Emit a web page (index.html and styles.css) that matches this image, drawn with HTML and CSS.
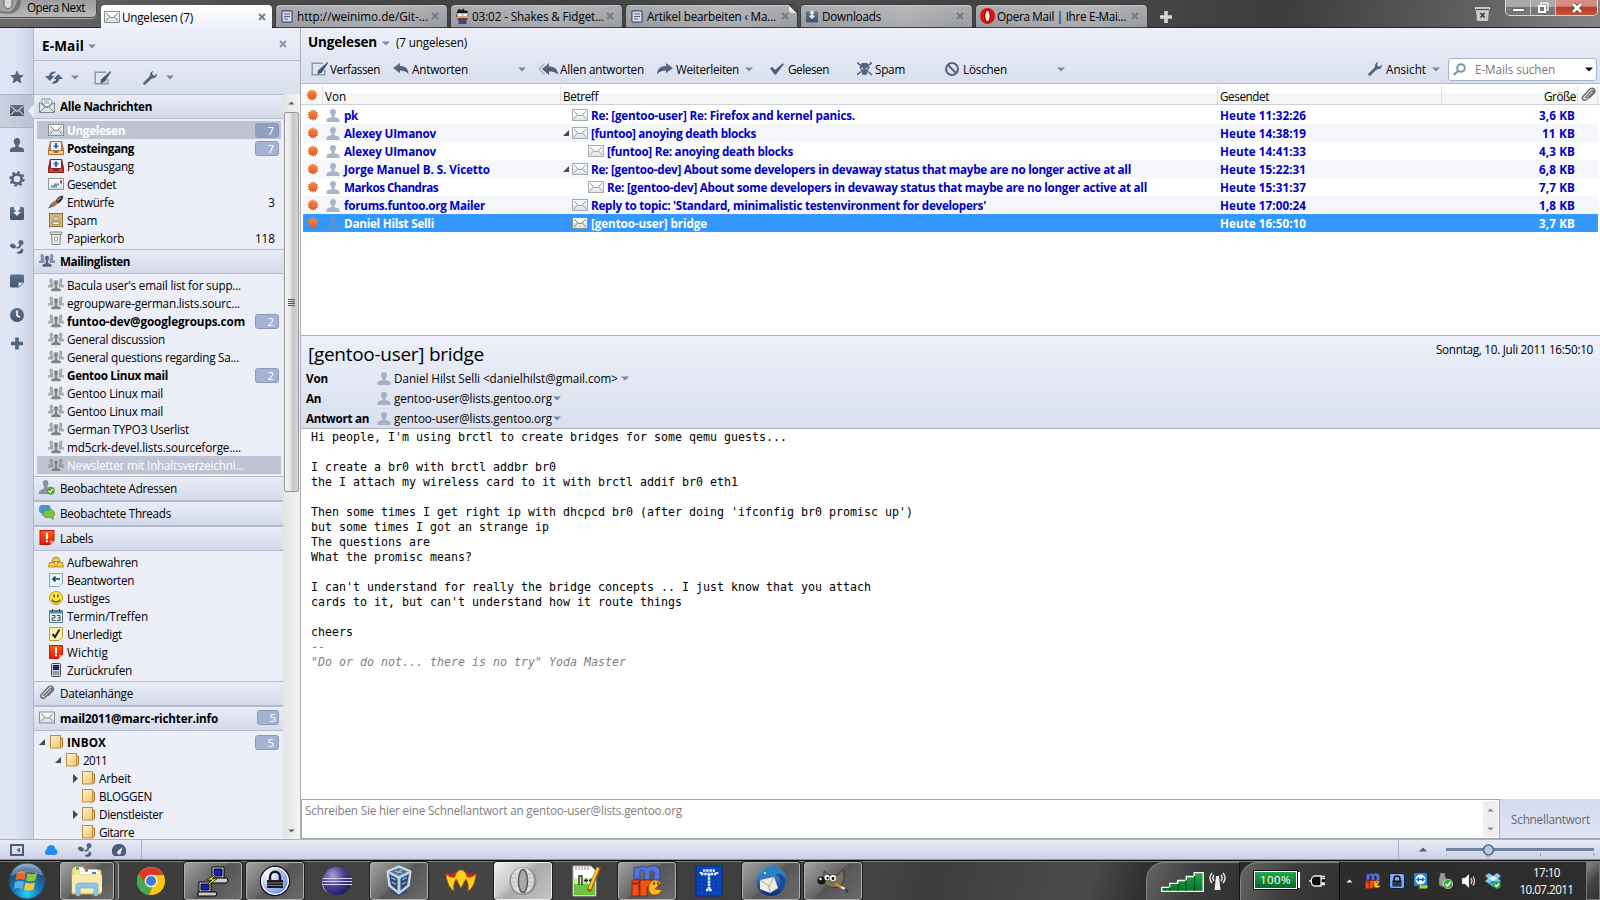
FILE: index.html
```html
<!DOCTYPE html>
<html lang="de">
<head>
<meta charset="utf-8">
<title>Ungelesen (7)</title>
<link rel="stylesheet" href="styles.css">
</head>
<body>
<svg class="defs" width="0" height="0">
<defs>
<linearGradient id="gSlate" x1="0" y1="0" x2="0" y2="1"><stop offset="0" stop-color="#5f7290"/><stop offset="1" stop-color="#44546e"/></linearGradient>
<linearGradient id="gEnv" x1="0" y1="0" x2="0" y2="1"><stop offset="0" stop-color="#fff"/><stop offset="1" stop-color="#d3dfe1"/></linearGradient>
<linearGradient id="gFold" x1="0" y1="0" x2="1" y2="1"><stop offset="0" stop-color="#fff3d4"/><stop offset="1" stop-color="#f2c277"/></linearGradient>
<linearGradient id="gRed" x1="0" y1="0" x2="0" y2="1"><stop offset="0" stop-color="#ff5a1c"/><stop offset="1" stop-color="#e01800"/></linearGradient>
<radialGradient id="gOrb" cx=".5" cy=".85" r=".9"><stop offset="0" stop-color="#29d3ff"/><stop offset=".35" stop-color="#1481bd"/><stop offset=".75" stop-color="#1d4a74"/><stop offset="1" stop-color="#9bb8cc"/></radialGradient>
<radialGradient id="gEcl" cx=".35" cy=".3" r=".8"><stop offset="0" stop-color="#a8a0d8"/><stop offset=".5" stop-color="#4a409a"/><stop offset="1" stop-color="#1a1458"/></radialGradient>
<radialGradient id="gLock" cx=".3" cy=".3" r=".9"><stop offset="0" stop-color="#fff"/><stop offset="1" stop-color="#4c74e8"/></radialGradient>
<linearGradient id="gGreen" x1="0" y1="0" x2="0" y2="1"><stop offset="0" stop-color="#1fae4c"/><stop offset="1" stop-color="#067228"/></linearGradient>
<linearGradient id="gSun" x1="0" y1="0" x2="0" y2="1"><stop offset="0" stop-color="#ee9150"/><stop offset="1" stop-color="#e0541f"/></linearGradient>
<linearGradient id="gBird" x1="0" y1="0" x2="0" y2="1"><stop offset="0" stop-color="#4aa6e0"/><stop offset="1" stop-color="#122a80"/></linearGradient>
</defs>
<symbol id="star" viewBox="0 0 14 14"><path fill="url(#gSlate)" d="M7 0l2 4.800 5 .4-3.800 3.300L11.400 13.500 7 10.800 2.600 13.500l1.200-5L0 5.200l5-.4z"/></symbol>
<symbol id="mailS" viewBox="0 0 14 11"><rect width="14" height="11" fill="url(#gSlate)"/><path d="M.5.8L7 6.500 13.500.8M.5 10.200L5 5.500M13.500 10.200L9 5.500" fill="none" stroke="#c3cadb" stroke-width="1.100"/></symbol>
<symbol id="person" viewBox="0 0 14 14"><path fill="currentColor" d="M7 0c2 0 3.200 1.300 3.200 3.300 0 1.600-.7 3-1.600 3.800v1.700c2 .5 5 .9 5.400 2.600V14H0v-2.600c.4-1.700 3.400-2.100 5.400-2.600V7.100C4.500 6.300 3.800 4.900 3.800 3.300 3.800 1.300 5 0 7 0z"/></symbol>
<symbol id="gear" viewBox="0 0 16 16"><circle cx="8" cy="8" r="4.700" fill="none" stroke="#526482" stroke-width="2.800"/><circle cx="8" cy="8" r="6.700" fill="none" stroke="#526482" stroke-width="2" stroke-dasharray="2.700 2.560"/></symbol>
<symbol id="dl" viewBox="0 0 14 14"><path fill="url(#gSlate)" d="M1 1h3v3h2V0h2v4h2V1h3l1 1v11l-1 1H1l-1-1V2z"/><path fill="#e3e8f4" d="M5.500 0h3v6H11L7 10 3 6h2.500z"/></symbol>
<symbol id="share" viewBox="0 0 14 14"><g fill="url(#gSlate)"><ellipse cx="3" cy="6" rx="3" ry="2.200" transform="rotate(20 3 6)"/><circle cx="11" cy="2.600" r="2.500"/><path d="M5 7.500C8 8 9 6 9.500 4.500l2 .3C11 8 8 9.800 5 7.500z"/><path d="M6.500 12.500c2 1.800 5.500 1.800 6.500-.7s-.5-3.600-2.300-3.200c.5 1.800-.7 3.100-4.200 3.900z"/></g></symbol>
<symbol id="note" viewBox="0 0 14 13"><path fill="url(#gSlate)" d="M1 0h12l1 1v7l-5 5H1l-1-1V1z"/><path fill="#dfe5f2" d="M8.500 12.500V8h5z"/></symbol>
<symbol id="clock" viewBox="0 0 14 14"><circle cx="7" cy="7" r="7" fill="url(#gSlate)"/><path d="M7 2.500V7.500l3 1.800" stroke="#fff" stroke-width="1.600" fill="none"/></symbol>
<symbol id="plus" viewBox="0 0 12 12"><path fill="currentColor" d="M4.200 0h3.600v4.200H12v3.600H7.800V12H4.200V7.800H0V4.200h4.200z"/></symbol>
<symbol id="sync" viewBox="0 0 18 13"><path fill="url(#gSlate)" d="M4 4C5 1.500 7.500 0 11 .8L9.500 2.600C7.800 2.600 7 3.500 7 5h2.500L4.800 10 0 5h3.700zM14 9c-1 2.500-3.500 4-7 3.200l1.500-1.800c1.700 0 2.500-.9 2.500-2.400H8.500L13.200 3 18 8h-3.700z"/></symbol>
<symbol id="pen" viewBox="0 0 17 14"><path d="M12 1.200H1.200v11.600h12.600V8" fill="none" stroke="#8d99ae" stroke-width="1.500"/><path fill="#465871" d="M16.500 0l.5 1-6 9.500-4.500 2 .5-4z"/></symbol>
<symbol id="wrench" viewBox="0 0 14 14"><path fill="#52647f" d="M10.500 0L9 2.500l1 1.800 2 .2L14 2.500c.3 2.500-1 4.800-4.300 4.800L8 8l-5.500 5.500c-1.500 1-3-.5-2-2L6 6l1-1.500C6.800 2 8.300.2 10.500 0z"/></symbol>
<symbol id="env" viewBox="0 0 16 12"><rect x=".5" y=".5" width="15" height="11" fill="url(#gEnv)" stroke="#8b8f90"/><path d="M2 2l4.500 4.500h3L14 2M2 10l3.500-4M14 10l-3.500-4" stroke="#7d8587" fill="none"/></symbol>
<symbol id="envAll" viewBox="0 0 16 15"><path d="M3 1h8l2 2v7H3z" fill="#f6fbfc" stroke="#7d9096"/><path d="M5 3h5M5 5h6" stroke="#76a6b6"/><path d="M.5 4.500v10h15v-10L8 10z" fill="#dfe8e9" stroke="#7f898b"/><path d="M1 14l5-5M15 14l-5-5M3 5l4 3.500h2L13 5" stroke="#778386" fill="none"/></symbol>
<symbol id="inb" viewBox="0 0 16 14"><path d="M2 0h12l2 9v5H0V9z" fill="#b4713a"/><path d="M3 1h10v8H3z" fill="#eef3fa"/><path d="M1 10h4l1 2h4l1-2h4v3H1z" fill="#f6cf94"/><path d="M7 2h2v2.500h2L8 8 5 4.500h2z" fill="#2b62c4"/></symbol>
<symbol id="outb" viewBox="0 0 16 14"><path d="M2 0h12l2 9v5H0V9z" fill="#8e241c"/><path d="M3 1h10v8H3z" fill="#eef3fa"/><path d="M1 10h4l1 2h4l1-2h4v3H1z" fill="#c9473c"/><path d="M7 8h2V5.500h2L8 2 5 5.500h2z" fill="#2b62c4"/></symbol>
<symbol id="sent" viewBox="0 0 16 12"><rect x=".5" y=".5" width="15" height="11" fill="url(#gEnv)" stroke="#929798"/><path fill="#b85a2b" d="M12 2h2v3.500h-2z"/><path d="M3 8.500h6M6 6.500h5" stroke="#6a9aaa" stroke-width="1.800"/></symbol>
<symbol id="quill" viewBox="0 0 16 13"><path fill="#42393a" d="M7 6c2-4 5-6 8-6 1 2-1 6-5 8z"/><path fill="#b96a45" d="M3 8l4-3 3 3-4 3z"/><path fill="#6c6c6c" d="M0 13l3-5 3 3z"/><path d="M9 5l4-3" stroke="#bbb"/></symbol>
<symbol id="spamI" viewBox="0 0 14 14"><rect x=".5" y=".5" width="13" height="13" fill="#d0b382" stroke="#957040"/><path d="M7 3l3 4-1.500 1L7 6 5.500 8 4 7zM3 9h8l-1 2.500H4z" fill="#fff8e8" stroke="#7d6136" stroke-width=".6"/></symbol>
<symbol id="trash" viewBox="0 0 13 14"><path d="M2 3h9l-.6 10.500H2.600z" fill="#ededed" stroke="#868686"/><rect x=".5" y="1" width="12" height="2.500" rx="1" fill="#ddd" stroke="#868686"/><path d="M5 6h3v4H5z" fill="none" stroke="#aaa"/></symbol>
<symbol id="grp" viewBox="0 0 16 13"><path fill="currentColor" opacity=".65" d="M3 0c1.500 0 2.200 1 2 2.500L4.500 4l1 1v4H0V7l2-1.200V4C1 2.500 1.500 0 3 0zM13 0c-1.500 0-2.200 1-2 2.500l.5 1.500-1 1v4H16V7l-2-1.200V4c1-1.500.5-4-1-4z"/><path fill="currentColor" stroke="#eef" stroke-width=".5" d="M8 1.500c1.800 0 2.500 1.200 2.300 3L9.500 6.500V9l3.500 1.500V13H3v-2.500L6.500 9V6.500l-.8-2c-.2-1.800.5-3 2.300-3z"/></symbol>
<symbol id="pers2" viewBox="0 0 15 14"><path fill="#8793a8" d="M6 0c2 0 3 1.300 2.800 3L8 6v2l4 2v3H0v-2.500L4.500 8V6l-1-3C3.500 1.300 4.500 0 6 0z"/><circle cx="11" cy="10" r="3.800" fill="#4ea82c"/><path d="M9 10l1.500 1.500L13 8.500" stroke="#fff" fill="none" stroke-width="1.200"/></symbol>
<symbol id="chat" viewBox="0 0 15 14"><path fill="#3f95dc" d="M2 0h7l2 2v4L9 8H5L3 10V8H2L0 6V2z"/><path fill="#7fc242" stroke="#4d8c22" stroke-width=".6" d="M6 4.500h6.500l2 2v3l-1.500 2 .5 2-3-1.800H6l-2-2v-3z"/></symbol>
<symbol id="excl" viewBox="0 0 14 14"><path fill="url(#gRed)" stroke="#c21800" d="M.5.500h13v9l-4 4h-9z"/><path fill="#ffb08c" d="M10 13v-3h3z"/><path fill="#fff" d="M6 2.500h2v6H6zM6 9.500h2v2H6z"/></symbol>
<symbol id="gold" viewBox="0 0 16 12"><path fill="#f3cf3f" stroke="#a67808" stroke-width=".8" d="M5.500 1.500h5l1.500 4H4zM1.500 6.500h5l1 4.500H.5zM9.500 6.500h5l1 4.500h-7z"/></symbol>
<symbol id="answ" viewBox="0 0 14 14"><path fill="#e8f5fb" stroke="#81a3b6" d="M.5.500h13v9.500l-3.500 3.500H.5z"/><path d="M11 6H4M6.500 3.500L4 6l2.500 2.500" stroke="#1f3c4e" stroke-width="1.700" fill="none"/></symbol>
<symbol id="smile" viewBox="0 0 14 14"><circle cx="7" cy="7" r="6.500" fill="#ffe93a" stroke="#bd9713"/><path d="M5 3.500v3M9 3.500v3M3 8.500c1.500 3.500 6.500 3.500 8 0" fill="none" stroke="#493c00" stroke-width="1.300"/></symbol>
<symbol id="cal" viewBox="0 0 14 14"><path fill="#e8f5fb" stroke="#587a93" d="M.5 1.500h13v12H.5z"/><path fill="#5b86a5" d="M1 2h12v2.500H1z"/><path d="M3.500 0v3M10.500 0v3" stroke="#31495a"/><path d="M3 6.500h3v2.500H3v2.500h3.500M8 6.500h3v5H8M8.500 9H11" fill="none" stroke="#3a4f5c"/></symbol>
<symbol id="todo" viewBox="0 0 14 14"><path fill="#fbf2a8" stroke="#b69d3c" d="M.5.500h13v9.500l-3.500 3.500H.5z"/><path d="M3.500 7L6 10l4.500-7.500" stroke="#222" stroke-width="2" fill="none"/></symbol>
<symbol id="phone" viewBox="0 0 10 14"><rect x=".5" y=".5" width="9" height="13" rx="1" fill="#d4d4d4" stroke="#444"/><path fill="#1b2472" d="M2 2h6v5H2z"/><path d="M2 9h6M2 11h6" stroke="#333" stroke-dasharray="1.500 .7"/></symbol>
<symbol id="clip" viewBox="0 0 15 15"><path d="M4 11l6.500-7c1.500-1 2.500.5 1.500 1.700L5.500 12.500C3 14.500 0 12 2 9.500L9 2c3-2 6 .5 4.500 3.500L8 11" fill="none" stroke="#6b6b6b" stroke-width="1.500"/></symbol>
<symbol id="fold" viewBox="0 0 14 14"><path d="M9 3h3.500v8l-1 1.500H9z" fill="#ebc078" stroke="#a77a2a"/><rect x=".5" y=".5" width="10" height="12.500" fill="url(#gFold)" stroke="#bb8f3e"/></symbol>
<symbol id="sun" viewBox="0 0 12 12"><path fill="url(#gSun)" d="M6 0L7.060 2.040 9 .8 8.900 3.100 11.200 3 9.960 4.940 12 6 9.960 7.060 11.200 9 8.900 8.900 9 11.200 7.060 9.960 6 12 4.940 9.960 3 11.200 3.100 8.900.8 9 2.040 7.060 0 6 2.040 4.940.8 3 3.100 3.100 3 .8 4.940 2.040z"/></symbol>
<symbol id="page" viewBox="0 0 12 13"><rect x=".8" y=".8" width="10.400" height="11.400" rx="1.500" fill="#d5dae2" stroke="#54637c" stroke-width="1.500"/><path d="M3 4h6M3 6.500h6M3 9h4" stroke="#54637c"/></symbol>
<symbol id="x" viewBox="0 0 8 8"><path d="M1 1l6 6M7 1L1 7" stroke="currentColor" stroke-width="1.800"/></symbol>
<symbol id="dn" viewBox="0 0 8 5"><path d="M0 .5h8L4 4.500z" fill="currentColor"/></symbol>
<symbol id="reply" viewBox="0 0 16 12"><path fill="url(#gSlate)" d="M0 5l7-5v3c5 0 8.500 2 8.500 8.500C14 8.500 11 7.500 7 7.500V10z"/></symbol>
<symbol id="rAll" viewBox="0 0 20 12"><path fill="url(#gSlate)" d="M4 6l7-6v3.500c5 0 8.500 2 9 8C17 9 15 8.500 11 8.500V12z"/><path d="M6.500.5L1 6l5.500 5.500" fill="none" stroke="#a4aebf" stroke-width="1.300"/></symbol>
<symbol id="fwd" viewBox="0 0 16 12"><path fill="url(#gSlate)" d="M16 5L9 0v3C4 3 .5 5 0 11.500 2 8.500 5 7.500 9 7.500V10z"/></symbol>
<symbol id="chk" viewBox="0 0 14 11"><path fill="#4b5d79" d="M0 4.500l2.500-1L5 6.500 12.500 0 14 .5 6 11H4.500z"/></symbol>
<symbol id="skull" viewBox="0 0 15 14"><path d="M0 1l3 2M15 1l-3 2M0 13l4-3.500M15 13l-4-3.500M1 .3l1 2M14 .3l-1 2" stroke="#52647f" stroke-width="1.400"/><path fill="#52647f" d="M3 3c1-3 8-3 9 0 .8 2 .2 4-1 5l-1 4c-1 1.300-4 1.300-5 0L4 8C2.800 7 2.200 5 3 3z"/><path fill="#dfe5f0" d="M4 5.500l2.500 1v1L4.500 7zM11 5.500l-2.500 1v1l2-.5z"/></symbol>
<symbol id="ban" viewBox="0 0 14 14"><circle cx="7" cy="7" r="5.900" fill="none" stroke="#52647f" stroke-width="2"/><path d="M3 3l8 8" stroke="#52647f" stroke-width="2"/></symbol>
<symbol id="mag" viewBox="0 0 13 13"><circle cx="8" cy="5" r="3.800" fill="none" stroke="#8194b3" stroke-width="2"/><path d="M5 8L.8 12" stroke="#8194b3" stroke-width="2.400"/></symbol>
<symbol id="opn" viewBox="0 0 6 6"><path d="M6 0v6H0z" fill="#4a4a4a"/></symbol>
<symbol id="cls" viewBox="0 0 5 9"><path d="M0 0v9l5-4.500z" fill="#4a4a4a"/></symbol>
<symbol id="padlock" viewBox="0 0 16 16"><rect x=".5" y=".5" width="15" height="15" rx="2" fill="#7fa8f6" stroke="#0b1b5c"/><path d="M5 8V6c0-4 6-4 6 0v2" fill="none" stroke="#111" stroke-width="1.500"/><path fill="#111" d="M3.500 7.500h9v6h-9z"/><path d="M4 10h8M4 12h8" stroke="#6f98e8" stroke-width=".6"/></symbol>
<symbol id="mirc" viewBox="0 0 32 32"><path d="M3 14V2h5v1c3-3 7-2 8 0 3-3 12-4 13 3v9h-6V7c0-2-4-2-4 0v8h-6V7c0-2-4-2-4 0v7z" fill="#5872dc" stroke="#263070" stroke-width=".7"/><path fill="#f0521a" stroke="#7c1c04" stroke-width=".8" d="M1 15h7v3H1zM1 19h7v12H1zM9 15h12v7h-5v9H9z"/><path d="M30 18c-3-4-9-4-11 0s-2 9 1 11 9 1 11-4l-7-1z" fill="#ffb81c" stroke="#8c4a00" stroke-width=".8"/><path d="M23 17v3M27 17v3" stroke="#222" stroke-width="1.300"/></symbol>
</svg>

<div class="tabbar">
  <div class="opbtn"><svg class="opo" viewBox="0 0 22 17"><path d="M0 0h21C21 8 17 13 9 14L0 13z" fill="#777"/><path d="M0 0h17C16 7 13 11 8 12L0 11z" fill="#a2a2a2"/><path d="M4-2v6c0 6 8 6 8 0v-6" fill="#d9d9d9" stroke="#666"/></svg><span data-w="58">Opera Next</span></div>
  <div class="tab on"><svg class="i16 ev"><use href="#env"/></svg><span data-w="71">Ungelesen (7)</span><svg class="x"><use href="#x"/></svg></div>
  <div class="tab"><svg class="i12 gap"><use href="#page"/></svg><span data-w="131">http://weinimo.de/Git-...</span><svg class="x"><use href="#x"/></svg></div>
  <div class="tab"><svg class="i14 face" viewBox="0 0 14 16"><path fill="#1b1a20" d="M1 5L3 1l3 1 3-2-1 2 4 1 1 4-1 2H1z"/><path fill="#dda97c" d="M1 5h12l-1 5H2z"/><path fill="#fff" d="M3 6h3v2H3zM8 6h3v2H8z"/><path fill="#6b4230" d="M2 10h10v2H2z"/><path fill="#4a3f7c" d="M3 12h8v4H3z"/></svg><span data-w="132">03:02 - Shakes &amp; Fidget...</span><svg class="x"><use href="#x"/></svg></div>
  <div class="tab curl"><svg class="i12 gap"><use href="#page"/></svg><span data-w="129">Artikel bearbeiten ‹ Ma...</span><svg class="x"><use href="#x"/></svg></div>
  <div class="tab"><svg class="i12 gap"><use href="#dl"/></svg><span data-w="59">Downloads</span><svg class="x"><use href="#x"/></svg></div>
  <div class="tab"><svg class="i14" viewBox="0 0 14 15"><ellipse cx="7" cy="7.500" rx="7" ry="7.500" fill="#d8150f"/><ellipse cx="7" cy="7.500" rx="2.500" ry="5.300" fill="#f4e4e2" stroke="#9a0b08"/></svg><span data-w="129">Opera Mail | Ihre E-Mai...</span><svg class="x"><use href="#x"/></svg></div>
  <svg class="newtab"><use href="#plus"/></svg>
  <svg class="bin" viewBox="0 0 15 14"><path fill="#c9c9c9" d="M0 0h15v3h-1l-1 11H2L1 3H0z"/><path d="M1 2.500h13" stroke="#444"/><path d="M5.500 6l4 4.500M9.500 6l-4 4.500" stroke="#333" stroke-width="1.500"/></svg>
  <div class="win"><b><i></i></b><b><svg viewBox="0 0 12 12"><path d="M4 3V1h7v7H9" fill="none" stroke="#eee" stroke-width="1.500"/><path d="M2 4h6v6H2z" fill="none" stroke="#fff" stroke-width="2"/></svg></b><b class="cl"><svg viewBox="0 0 12 12"><path d="M2 2l8 8M10 2l-8 8" stroke="#444" stroke-width="4.500"/><path d="M2 2l8 8M10 2l-8 8" stroke="#fff" stroke-width="2.800"/></svg></b></div>
</div>

<div class="app">
  <nav class="rail">
    <i><svg class="i14"><use href="#star"/></svg></i>
    <i class="sel"><svg class="i14"><use href="#mailS"/></svg></i>
    <i><svg class="i14"><use href="#person"/></svg></i>
    <i><svg class="i16"><use href="#gear"/></svg></i>
    <i><svg class="i14"><use href="#dl"/></svg></i>
    <i><svg class="i14"><use href="#share"/></svg></i>
    <i><svg class="i14"><use href="#note"/></svg></i>
    <i><svg class="i14"><use href="#clock"/></svg></i>
    <i class="last"><svg class="i12"><use href="#plus"/></svg></i>
  </nav>

  <aside class="side">
    <div class="sidehead"><b class="big" data-w="42">E-Mail</b><svg class="dn"><use href="#dn"/></svg><svg class="x"><use href="#x"/></svg></div>
    <div class="sidetools"><svg class="sync"><use href="#sync"/></svg><svg class="dn"><use href="#dn"/></svg><svg class="pen"><use href="#pen"/></svg><svg class="i14"><use href="#wrench"/></svg><svg class="dn"><use href="#dn"/></svg></div>
    <div class="sidebody">
      <div class="list">
        <div class="sec b first"><svg><use href="#envAll"/></svg><span data-w="92">Alle Nachrichten</span></div>
        <ul>
          <li class="b hl"><svg><use href="#env"/></svg><span data-w="58">Ungelesen</span><em>7</em></li>
          <li class="b"><svg><use href="#inb"/></svg><span data-w="67">Posteingang</span><em>7</em></li>
          <li><svg><use href="#outb"/></svg><span data-w="67">Postausgang</span></li>
          <li><svg><use href="#sent"/></svg><span data-w="49">Gesendet</span></li>
          <li><svg><use href="#quill"/></svg><span data-w="47">Entwürfe</span><u>3</u></li>
          <li><svg><use href="#spamI"/></svg><span data-w="30">Spam</span></li>
          <li><svg><use href="#trash"/></svg><span data-w="57">Papierkorb</span><u>118</u></li>
        </ul>
        <div class="sec b dk"><svg><use href="#grp"/></svg><span data-w="70">Mailinglisten</span></div>
        <ul class="gr">
          <li><svg><use href="#grp"/></svg><span data-w="174">Bacula user's email list for supp...</span></li>
          <li><svg><use href="#grp"/></svg><span data-w="173">egroupware-german.lists.sourc...</span></li>
          <li class="b"><svg><use href="#grp"/></svg><span data-w="178">funtoo-dev@googlegroups.com</span><em>2</em></li>
          <li><svg><use href="#grp"/></svg><span data-w="98">General discussion</span></li>
          <li><svg><use href="#grp"/></svg><span data-w="172">General questions regarding Sa...</span></li>
          <li class="b"><svg><use href="#grp"/></svg><span data-w="101">Gentoo Linux mail</span><em>2</em></li>
          <li><svg><use href="#grp"/></svg><span data-w="96">Gentoo Linux mail</span></li>
          <li><svg><use href="#grp"/></svg><span data-w="96">Gentoo Linux mail</span></li>
          <li><svg><use href="#grp"/></svg><span data-w="122">German TYPO3 Userlist</span></li>
          <li><svg><use href="#grp"/></svg><span data-w="174">md5crk-devel.lists.sourceforge....</span></li>
          <li class="hl"><svg><use href="#grp"/></svg><span data-w="177">Newsletter mit Inhaltsverzeichni...</span></li>
        </ul>
        <div class="sec"><svg><use href="#pers2"/></svg><span data-w="117">Beobachtete Adressen</span></div>
        <div class="sec"><svg><use href="#chat"/></svg><span data-w="111">Beobachtete Threads</span></div>
        <div class="sec"><svg><use href="#excl"/></svg><span data-w="33">Labels</span></div>
        <ul>
          <li><svg><use href="#gold"/></svg><span data-w="71">Aufbewahren</span></li>
          <li><svg><use href="#answ"/></svg><span data-w="67">Beantworten</span></li>
          <li><svg><use href="#smile"/></svg><span data-w="43">Lustiges</span></li>
          <li><svg><use href="#cal"/></svg><span data-w="81">Termin/Treffen</span></li>
          <li><svg><use href="#todo"/></svg><span data-w="55">Unerledigt</span></li>
          <li><svg><use href="#excl"/></svg><span data-w="41">Wichtig</span></li>
          <li><svg><use href="#phone"/></svg><span data-w="65">Zurückrufen</span></li>
        </ul>
        <div class="sec"><svg><use href="#clip"/></svg><span data-w="73">Dateianhänge</span></div>
        <div class="sec b"><svg><use href="#env"/></svg><span data-w="158">mail2011@marc-richter.info</span><em>5</em></div>
        <ul class="tree">
          <li class="b l0"><svg class="ar"><use href="#opn"/></svg><svg><use href="#fold"/></svg><span data-w="39">INBOX</span><em>5</em></li>
          <li class="l1"><svg class="ar"><use href="#opn"/></svg><svg><use href="#fold"/></svg><span data-w="24">2011</span></li>
          <li class="l2"><svg class="ar cl"><use href="#cls"/></svg><svg><use href="#fold"/></svg><span data-w="32">Arbeit</span></li>
          <li class="l2"><svg class="ar cl"></svg><svg><use href="#fold"/></svg><span data-w="53">BLOGGEN</span></li>
          <li class="l2"><svg class="ar cl"><use href="#cls"/></svg><svg><use href="#fold"/></svg><span data-w="64">Dienstleister</span></li>
          <li class="l2"><svg class="ar cl"></svg><svg><use href="#fold"/></svg><span data-w="35">Gitarre</span></li>
        </ul>
      </div>
      <div class="scroll"><svg class="up dn"><use href="#dn"/></svg><div class="thumb"><s></s><s></s><s></s><s></s></div><svg class="dn"><use href="#dn"/></svg></div>
    </div>
  </aside>

  <main class="main">
    <div class="head">
      <div class="title"><b class="big" data-w="69">Ungelesen</b><svg class="dn"><use href="#dn"/></svg><span data-w="71">(7 ungelesen)</span></div>
      <div class="tools">
        <div><svg class="pen"><use href="#pen"/></svg><span data-w="50">Verfassen</span></div>
        <div><svg class="t16"><use href="#reply"/></svg><span data-w="56">Antworten</span><svg class="dn far"><use href="#dn"/></svg></div>
        <div><svg class="t20"><use href="#rAll"/></svg><span data-w="84">Allen antworten</span></div>
        <div><svg class="t16"><use href="#fwd"/></svg><span data-w="63">Weiterleiten</span><svg class="dn near"><use href="#dn"/></svg></div>
        <div><svg class="i14 c"><use href="#chk"/></svg><span data-w="41">Gelesen</span></div>
        <div><svg class="t15"><use href="#skull"/></svg><span data-w="30">Spam</span></div>
        <div><svg class="i14 c"><use href="#ban"/></svg><span data-w="44">Löschen</span><svg class="dn far"><use href="#dn"/></svg></div>
        <div><svg class="i14 c"><use href="#wrench"/></svg><span data-w="40">Ansicht</span><svg class="dn near"><use href="#dn"/></svg></div>
        <div class="search"><svg class="i13"><use href="#mag"/></svg><span data-w="80">E-Mails suchen</span><svg class="dn"><use href="#dn"/></svg></div>
      </div>
    </div>
    <div class="mails">
      <div class="cols"><span class="c0"><svg><use href="#sun"/></svg></span><span class="c1"><span data-w="21">Von</span></span><span class="c2"><span data-w="35">Betreff</span></span><span class="c3"><span data-w="49">Gesendet</span></span><span class="c4"><span data-w="32">Größe</span></span><span class="c5"><svg><use href="#clip"/></svg></span></div>
      <div class="row"><svg class="su"><use href="#sun"/></svg><svg class="pe"><use href="#person"/></svg><span class="nm"><span data-w="14">pk</span></span><span class="tw"></span><svg class="en"><use href="#env"/></svg><span class="sj"><span data-w="264">Re: [gentoo-user] Re: Firefox and kernel panics.</span></span><span class="dt"><span data-w="86">Heute 11:32:26</span></span><span class="sz"><span data-w="36">3,6 KB</span></span></div>
      <div class="row"><svg class="su"><use href="#sun"/></svg><svg class="pe"><use href="#person"/></svg><span class="nm"><span data-w="92">Alexey UImanov</span></span><span class="tw"><svg><use href="#opn"/></svg></span><svg class="en"><use href="#env"/></svg><span class="sj"><span data-w="165">[funtoo] anoying death blocks</span></span><span class="dt"><span data-w="86">Heute 14:38:19</span></span><span class="sz"><span data-w="33">11 KB</span></span></div>
      <div class="row ch"><svg class="su"><use href="#sun"/></svg><svg class="pe"><use href="#person"/></svg><span class="nm"><span data-w="92">Alexey UImanov</span></span><span class="tw"></span><svg class="en"><use href="#env"/></svg><span class="sj"><span data-w="186">[funtoo] Re: anoying death blocks</span></span><span class="dt"><span data-w="86">Heute 14:41:33</span></span><span class="sz"><span data-w="36">4,3 KB</span></span></div>
      <div class="row"><svg class="su"><use href="#sun"/></svg><svg class="pe"><use href="#person"/></svg><span class="nm"><span data-w="146">Jorge Manuel B. S. Vicetto</span></span><span class="tw"><svg><use href="#opn"/></svg></span><svg class="en"><use href="#env"/></svg><span class="sj"><span data-w="540">Re: [gentoo-dev] About some developers in devaway status that maybe are no longer active at all</span></span><span class="dt"><span data-w="86">Heute 15:22:31</span></span><span class="sz"><span data-w="36">6,8 KB</span></span></div>
      <div class="row ch"><svg class="su"><use href="#sun"/></svg><svg class="pe"><use href="#person"/></svg><span class="nm"><span data-w="94">Markos Chandras</span></span><span class="tw"></span><svg class="en"><use href="#env"/></svg><span class="sj"><span data-w="540">Re: [gentoo-dev] About some developers in devaway status that maybe are no longer active at all</span></span><span class="dt"><span data-w="86">Heute 15:31:37</span></span><span class="sz"><span data-w="36">7,7 KB</span></span></div>
      <div class="row"><svg class="su"><use href="#sun"/></svg><svg class="pe"><use href="#person"/></svg><span class="nm"><span data-w="141">forums.funtoo.org Mailer</span></span><span class="tw"></span><svg class="en"><use href="#env"/></svg><span class="sj"><span data-w="395">Reply to topic: 'Standard, minimalistic testenvironment for developers'</span></span><span class="dt"><span data-w="86">Heute 17:00:24</span></span><span class="sz"><span data-w="36">1,8 KB</span></span></div>
      <div class="row cur"><svg class="su"><use href="#sun"/></svg><svg class="pe"><use href="#person"/></svg><span class="nm"><span data-w="90">Daniel Hilst Selli</span></span><span class="tw"></span><svg class="en"><use href="#env"/></svg><span class="sj"><span data-w="116">[gentoo-user] bridge</span></span><span class="dt"><span data-w="86">Heute 16:50:10</span></span><span class="sz"><span data-w="36">3,7 KB</span></span></div>
    </div>
    <div class="mhead">
      <div class="subj"><span class="st" data-w="176">[gentoo-user] bridge</span><span class="when" data-w="157">Sonntag, 10. Juli 2011 16:50:10</span></div>
      <div class="f"><b><span data-w="22">Von</span></b><svg><use href="#person"/></svg><span data-w="224">Daniel Hilst Selli &lt;danielhilst@gmail.com&gt;</span><svg class="dn s"><use href="#dn"/></svg></div>
      <div class="f"><b><span data-w="15">An</span></b><svg><use href="#person"/></svg><span data-w="158">gentoo-user@lists.gentoo.org</span><svg class="dn"><use href="#dn"/></svg></div>
      <div class="f"><b><span data-w="63">Antwort an</span></b><svg><use href="#person"/></svg><span data-w="158">gentoo-user@lists.gentoo.org</span><svg class="dn"><use href="#dn"/></svg></div>
    </div>
    <pre class="msg">Hi people, I'm using brctl to create bridges for some qemu guests...

I create a br0 with brctl addbr br0
the I attach my wireless card to it with brctl addif br0 eth1

Then some times I get right ip with dhcpcd br0 (after doing 'ifconfig br0 promisc up')
but some times I got an strange ip
The questions are
What the promisc means?

I can't understand for really the bridge concepts .. I just know that you attach
cards to it, but can't understand how it route things

cheers
<span class="sig">--
<i>"Do or do not... there is no try" Yoda Master</i></span></pre>
    <div class="quick"><div class="qt"><span data-w="377">Schreiben Sie hier eine Schnellantwort an gentoo-user@lists.gentoo.org</span></div><div class="qs"><svg class="up dn"><use href="#dn"/></svg><svg class="dn"><use href="#dn"/></svg></div><div class="qb"><span data-w="79">Schnellantwort</span></div></div>
  </main>
</div>

<div class="status">
  <div class="sl"><svg viewBox="0 0 14 12" class="pn"><rect x="1" y="1" width="12" height="10" fill="none" stroke="#4b5d79" stroke-width="2"/><path d="M10 3.500v5L6.500 6z" fill="#4b5d79"/></svg><svg viewBox="0 0 14 10" class="cloud"><path fill="#1f8df2" d="M3 10a3 3 0 0 1-.5-5.500C3 1.500 5 0 7.200 0 9.500 0 11 1.500 11.300 3.800A3.200 3.200 0 0 1 11 10z"/></svg><svg class="i14"><use href="#share"/></svg><svg viewBox="0 0 14 12" class="pn"><path fill="#4b5d79" d="M7 0a7 7 0 0 1 6 11l-1.500 1h-9L1 11A7 7 0 0 1 7 0z"/><path fill="#dfe5f2" d="M10.500 3L9 8.500a2 2 0 1 1-3-1.800z"/></svg></div>
  <div class="sr"><svg class="up dn"><use href="#dn"/></svg><svg class="slider" viewBox="0 0 150 16"><path d="M0 6.500h148" stroke="#6f84a4" stroke-width="3"/><path d="M0 10.500v2M94.500 10.500v2M148 10.500v2M42 12v2" stroke="#6f7b90"/><circle cx="42.500" cy="7" r="5" fill="#b4cbe0" stroke="#50688a" stroke-width="1.600"/></svg></div>
</div>

<div class="task">
  <div class="orb"><svg viewBox="0 0 38 38"><circle cx="19" cy="19" r="18" fill="url(#gOrb)" stroke="#2a4a63"/><path fill="#e8682c" d="M9 11c3-2 6-2 9-.5l-1.500 7.500c-3-1.300-6-1.200-9 .3z"/><path fill="#8cc63c" d="M19.500 11c3 1.500 6 1.500 9.500 0L27.500 18.500c-3 1.300-6 1.300-9.500 0z"/><path fill="#5aabe8" d="M7 20c3-1.500 6-1.500 9 0l-1.500 7c-3-1.500-6-1.500-8.500 0z"/><path fill="#fbc82c" d="M17.500 20.500c3.500 1.300 6.500 1.300 9.500 0L25.500 27.500c-3 1.500-6 1.500-9.500 0z"/><path d="M3 14C5 5 12 2 19 2s14 3 16 12c-9-5-23-5-32 0z" fill="#fff" opacity=".3"/></svg></div>
  <div class="tb run stack"><svg viewBox="0 0 32 32"><path fill="#f3df95" stroke="#cfae52" stroke-width=".8" d="M1 5l2-3h9l2 3h16v24H1z"/><path d="M4 3.500h8M9 5.500h18M9 8h20" stroke="#fff" stroke-width="2"/><path d="M5 3.500h3" stroke="#1c9c38" stroke-width="2"/><path d="M14 5.500h3" stroke="#d42f1e" stroke-width="2"/><path d="M21 8h4" stroke="#3487d6" stroke-width="2"/><path fill="#f8eab0" d="M1 10h30v17H1z"/><path fill="#8fc8e6" stroke="#5b9fc6" stroke-width=".6" d="M5 31V21c0-2 1-3 3-3h16c2 0 3 1 3 3v10h-4v-8H9v8z"/></svg></div>
  <div class="tb"><svg viewBox="0 0 32 32"><circle cx="16" cy="16" r="14" fill="#fbc914"/><path fill="#d93a2b" d="M3.900 9A14 14 0 0 1 28.500 10H16a6 6 0 0 0-5.500 3.800L9 18z"/><path fill="#48a84c" d="M3.900 9L10.500 19a6 6 0 0 0 7 2.800L14 30A14 14 0 0 1 3.900 9z"/><circle cx="16" cy="16" r="6.300" fill="#f0f0f0"/><circle cx="16" cy="16" r="5" fill="#3f7fd0"/></svg></div>
  <div class="tb run"><svg viewBox="0 0 32 32"><g stroke="#000"><path fill="#ddd" d="M15 2h12v11H15zM2 17h12v10H2z"/><path fill="#ccc" d="M14 13h16l1 3-2 2H14zM1 27h18l1 3-2 1H1z"/><path fill="#1020d0" d="M17 4h8v7h-8zM4 19h8v6H4z"/><path fill="#ffef1a" stroke-width=".6" d="M21 8l-11 7h5l-7 7 12-8h-5z"/></g></svg></div>
  <div class="tb run"><svg viewBox="0 0 32 32"><circle cx="16" cy="16" r="14.500" fill="url(#gLock)" stroke="#111" stroke-width="1.500"/><circle cx="16" cy="16" r="13.300" fill="none" stroke="#fff" stroke-width="1.300"/><path d="M11 16v-4c0-7 10-7 10 0v4" fill="none" stroke="#1a1a1a" stroke-width="2.500"/><path fill="#1c1c1c" d="M8 15h16v8H8z"/><path d="M8 18h16M8 20.500h16" stroke="#777"/></svg></div>
  <div class="tb"><svg viewBox="0 0 32 32"><circle cx="16" cy="16" r="14" fill="url(#gEcl)"/><path d="M9 3C-1 9-1 23 9 29-4 23 1 7 9 3z" fill="#e8b0e0"/><path d="M2 13.500h29M2 16.500h29M2 19.500h29" stroke="#d8d8f0" stroke-width="1.100"/></svg></div>
  <div class="tb run"><svg viewBox="0 0 32 32"><path fill="#3b5170" d="M10 22h12l3 6-9 3-9-3z"/><path fill="#b9cfe2" stroke="#e2eef8" d="M16 1l12 5-2 15-10 8-10-8L4 6z"/><path fill="#56718f" d="M16 3l9 3.500-9 4.500-9-4.500z"/><path fill="#2a4a70" d="M6 9l8.500 4.500v12L8 20zM26 9l-8.500 4.500v12L24 20z"/><path d="M8 12.500l5 2.500M9 17l4 2.500M24 12.500L19 15M23 17l-4 2.500M12 6l7 2M14 8l5-3" stroke="#9fc0dc" stroke-width="1.300"/></svg></div>
  <div class="tb"><svg viewBox="0 0 32 32"><path fill="#d3201a" d="M1 8c4 2 7 2 10-1h10c3 3 6 3 10 1-1 4-2 6-4 8H5C3 14 2 12 1 8z"/><path fill="#ffd21e" stroke="#b85f00" stroke-width=".7" d="M1 9c1 8 3 14 8 17-1-5 0-9 2-12 2 2 3 6 5 9 2-3 3-7 5-9 2 3 3 7 2 12 5-3 7-9 8-17-3 3-6 4-9 3-1-4-3-7-6-7s-5 3-6 7c-3 1-6 0-9-3z"/></svg></div>
  <div class="tb run lit"><svg viewBox="0 0 32 32"><ellipse cx="16" cy="16" rx="13.500" ry="14" fill="#8d8d8d"/><ellipse cx="15.500" cy="15.500" rx="11.500" ry="13" fill="#dcdcdc"/><ellipse cx="16" cy="16" rx="4.500" ry="11.500" fill="#a9a9a9" stroke="#5c5c5c" stroke-width="1.500"/><path d="M6 9h5M4 13h7M4 17h7M5 21h6M21 9h5M21 13h7M21 17h7M21 21h6" stroke="#aaa" stroke-width=".7"/></svg></div>
  <div class="tb"><svg viewBox="0 0 32 32"><path fill="#fff" stroke="#aaa" d="M4 1h18l5 5v25H4z"/><path fill="#6dc43a" d="M5 18h21v12H5z"/><path fill="#cdeeab" d="M5 13h21v6H5z"/><path d="M7 2v3M10 2v3M13 2v3M16 2v3M19 2v3" stroke="#888"/><path d="M10 20v-9h3v9M15 15.500h4M17 13.500v4M20 15.500h4M22 13.500v4" stroke="#222" fill="none" stroke-width="1.300"/><path d="M30 2L20 26" stroke="#9a5c10" stroke-width="4.500"/><path d="M29 3L20.500 24" stroke="#ffc838" stroke-width="2.500"/></svg></div>
  <div class="tb run"><svg><use href="#mirc"/></svg></div>
  <div class="tb"><svg viewBox="0 0 32 32"><path fill="#0a48c4" stroke="#062c80" d="M3 1h26v30H3z"/><path d="M7 0v32M11 0v32M15 0v32M19 0v32M23 0v32M3 5h26M3 9h26M3 13h26M3 17h26M3 21h26M3 25h26" stroke="#0a37a0" stroke-width=".8"/><path d="M8 9v-2M10 5.500h12M24 9V7M8 9h16M16 9v16M13 25h6" stroke="#e6f2ff" stroke-width="2.600" stroke-dasharray="2.500 .7" fill="none"/></svg></div>
  <div class="tb run"><svg viewBox="0 0 32 32"><path fill="url(#gBird)" d="M4 8C8 0 20-1 27 5c6 6 5 17-1 22-6 6-17 5-22-2C0 19 1 12 4 8z"/><path fill="#f1ebdf" d="M5 15l14-3 4 11-8 5-10-4z"/><path d="M5 15l9 6 5-9M14 21l1 7" fill="none" stroke="#b0a692"/><path fill="#2b7fc4" d="M6 11C7 4 13 0 19 1c7 1 11 7 11 12-3-5-6-6-10-5-4 0-5 5-9 5-3 0-4-1-5-2z"/><path fill="#174a9c" d="M20 9c6 2 8 9 3 17 6-2 8-8 7-13-3-4-6-5-10-4z"/><circle cx="10" cy="8" r="1.200" fill="#fd4"/></svg></div>
  <div class="tb run"><svg viewBox="0 0 32 32"><path fill="#7a7060" stroke="#3d3930" d="M7 6l5 4h9l5-6c2 8 1 14-3 17-5 3-12 2-16-3z"/><ellipse cx="4.500" cy="15.500" rx="4" ry="4" fill="#161616"/><circle cx="3.500" cy="14" r="1.300" fill="#eee"/><circle cx="10" cy="12.500" r="2.600" fill="#fff"/><circle cx="16" cy="13" r="3" fill="#fff"/><circle cx="10.500" cy="13" r="1.200"/><circle cx="16" cy="13.500" r="1.400"/><path d="M18 19l6 3" stroke="#e38b2c" stroke-width="2"/><path d="M24 22l4 2" stroke="#eee" stroke-width="2"/><path d="M28 24l3 3" stroke="#333" stroke-width="2"/></svg></div>
  <div class="tray">
    <div class="pan sig"><svg viewBox="0 0 66 20" class="bars"><path d="M.7 19.300v-4h8v-4h8V8.500h8.500v-4h8V.700h9v18.600z" fill="url(#gGreen)" stroke="#fff" stroke-width="1.300"/><path d="M8.700 15v4M17 12v7M25 8v11M33.500 4v15" stroke="#0b4a1c" stroke-width="1.200"/><g fill="none" stroke="#eee" stroke-width="1.400"><path d="M53 3c-1.500 2-1.500 4 0 6M51 1c-2.500 3-2.500 7 0 10M60 3c1.500 2 1.500 4 0 6M62 1c2.500 3 2.500 7 0 10"/></g><path fill="#eee" d="M55 4h3l1.500 14h-6z"/></svg></div>
    <div class="pan bat"><div class="cell"><span data-w="31">100%</span></div><svg viewBox="0 0 16 12" class="plug"><path d="M16 1.500h-4V1H6C1 1 1 11 6 11h6V9.500h4M12 1v10M12 3.500h4M12 8h4" fill="#0a0a0a" stroke="#eee" stroke-width="1.300"/><path d="M0 6h2.500" stroke="#eee" stroke-width="1.500"/></svg></div>
    <div class="icons">
      <svg class="up dn"><use href="#dn"/></svg>
      <svg class="i16"><use href="#mirc"/></svg>
      <svg class="i16"><use href="#padlock"/></svg>
      <svg class="i16" viewBox="0 0 16 16"><rect width="13" height="13" x="1" rx="1" fill="#1c86e4"/><circle cx="7.500" cy="6.500" r="5" fill="#fff"/><path d="M3 6.500l3-2.500v1.800h3V4l3 2.500L9 9V7.300H6V9z" fill="#1c66c4"/><path d="M7 12.500h8l-1 3H6z" fill="#b5d233"/></svg>
      <svg class="i16" viewBox="0 0 16 16"><path fill="#999" stroke="#555" stroke-width=".6" d="M3 0h5v4h1v8l-3 2-4-2V4h1z"/><circle cx="11" cy="11" r="4.700" fill="#3aa63a" stroke="#d8f0d8" stroke-width=".7"/><path d="M8.500 11l2 2 3-4" stroke="#fff" fill="none" stroke-width="1.500"/></svg>
      <svg class="i16" viewBox="0 0 16 16"><path fill="#fff" stroke="#777" stroke-width=".5" d="M1 5h3l4-4v14l-4-4H1z"/><path d="M10 5c1.300 2 1.300 4 0 6M12 3.500c2 3 2 6 0 9" fill="none" stroke="#ddd" stroke-width="1.200"/></svg>
      <svg class="i16" viewBox="0 0 16 16"><path fill="#7ecbf5" stroke="#2a7ec0" stroke-width=".5" d="M4 0l4 3 4-3 4 3-3 2.500 3 2.500-4 3-4-3-4 3-4-3 3-2.500L0 3z"/><path fill="#e9f7ff" d="M8 3l4 2.500L8 8 4 5.500z"/><path fill="#4ea4de" d="M4 11l4-2 4 2-4 3z"/><circle cx="12" cy="12" r="3.800" fill="#33a33a"/><path d="M10 12l1.500 1.500L14 10.500" stroke="#fff" fill="none" stroke-width="1.300"/></svg>
    </div>
    <div class="time"><span data-w="27">17:10</span><span data-w="54">10.07.2011</span></div>
    <div class="desk"></div>
  </div>
</div>
<script src="fit.js"></script>
</body>
</html>
```

FILE: fit.js
```js
document.querySelectorAll('[data-w]').forEach(function (el) {
  var natural = el.getBoundingClientRect().width;
  var target = parseFloat(el.dataset.w);
  el.style.letterSpacing = ((target - natural) / el.textContent.length).toFixed(3) + 'px';
});
```

FILE: styles.css
```css
* { box-sizing: border-box; }
body { margin: 0; width: 1600px; height: 900px; overflow: hidden; display: flex; flex-direction: column; font: 11.7px/16px "Open Sans", "Noto Sans", sans-serif; color: #000; background: #fff; }
svg { display: block; flex: none; }
.defs { position: absolute; }
[data-w] { display: inline-block; white-space: pre; flex: none; }
ul { list-style: none; margin: 0; padding: 2px 0; }
.i12 { width: 12px; height: 13px; }
.i13 { width: 13px; height: 13px; }
.i14 { width: 14px; height: 14px; }
.i16 { width: 16px; height: 16px; }
.dn { width: 8px; height: 5px; color: #7b87a0; }
.up { transform: scaleY(-1); }
.x { width: 8px; height: 8px; color: #8791a3; }
.big { font-size: 13.5px; }

/* tab strip */
.tabbar { height: 28px; flex: none; display: flex; align-items: flex-start; background: linear-gradient(100deg, #6d6d6d 0, #585858 9%, #484848 20%, #424242 35%, #505050 50%, #434343 60%, #474747 70%, #3c3c3c 80%, #606060 92%, #858585 100%); border-bottom: 1px solid #222; }
.opbtn { width: 97px; height: 18px; margin-right: 4px; display: flex; border: 1px solid #4a4a4a; border-top: 0; border-left: 0; border-radius: 0 0 5px 0; background: linear-gradient(#9d9d9d, #b9b9b9); box-shadow: 0 1px 0 #aaa; }
.opo { width: 22px; height: 17px; margin-right: 5px; }
.opbtn span { line-height: 15px; }
.tab { width: 171px; height: 22px; margin: 5px 4px 0 0; display: flex; align-items: center; padding: 0 8px 0 5px; border-radius: 4px 4px 0 0; background: linear-gradient(90deg, rgba(255,255,255,0), rgba(255,255,255,.16) 60%, rgba(255,255,255,0)), linear-gradient(#aaacb0, #999b9f); box-shadow: inset 0 1px 0 #c6c7ca, 0 0 0 1px #3b3b3b; flex: none; position: relative; }
.tab.on { width: 171px; height: 23px; padding: 0 6px 0 3px; background: linear-gradient(#fff, #edf0f9); box-shadow: none; }
.tab > .gap:first-child { margin-right: 4px; }
.tab.on > svg:first-child { margin-right: 2px; height: 12px; }
.tab > .face:first-child { margin: 0 2px 0 -1px; height: 16px; }
.tab > .i14:first-child { margin-right: 2px; margin-left: -1px; width: 15px; height: 16px; }
.tab .x { margin-left: auto; color: #6f7b8d; }
.curl::after { content: ""; position: absolute; right: 0; top: 0; width: 8px; height: 8px; background: linear-gradient(45deg, #eee 50%, #4a4a4a 50%); border-radius: 0 0 0 4px; }
.newtab { width: 12px; height: 12px; margin: 11px 0 0 9px; color: #d5d5d5; }
.bin { width: 15px; height: 14px; margin: 7px 15px 0 auto; }
.win { display: flex; width: 93px; height: 16px; margin-right: 2px; border: 1px solid #ddd; border-top: 0; border-radius: 0 0 5px 5px; overflow: hidden; }
.win b { width: 25px; border-right: 1px solid #ccc; background: linear-gradient(#aaa 45%, #777 50%); display: flex; justify-content: center; align-items: center; }
.win b.cl { flex: 1; border: 0; background: linear-gradient(#d48d80 40%, #b93c25 50%, #c9533a); }
.win i { width: 11px; height: 2px; background: #fff; border: 1px solid #666; margin-top: 4px; box-sizing: content-box; }
.win svg { width: 12px; height: 12px; }

/* body */
.app { display: flex; height: 811px; flex: none; }
.rail { width: 34px; flex: none; border-right: 1px solid #b1b9cb; background: linear-gradient(90deg, #dfe5f4 40%, #ccd3e6); padding-top: 32px; display: flex; flex-direction: column; color: #52647f; }
.rail i { height: 34px; display: flex; align-items: center; justify-content: center; padding-bottom: 1px; }
.rail i.sel { background: linear-gradient(90deg, #cbd1df, #bac2d3); border-top: 1px solid #a9b1c3; border-bottom: 1px solid #a9b1c3; position: relative; }
.rail i.sel .i14 { height: 11px; }
.rail i.sel::after { content: ""; position: absolute; right: -1px; top: 9px; border: 7px solid transparent; border-left: 0; border-right: 6px solid #eceff8; }
.rail i.last { height: 24px; }
.side { width: 267px; flex: none; border-right: 1px solid #a9afbb; background: #eceff8; display: flex; flex-direction: column; }
.sidehead { height: 33px; display: flex; align-items: center; padding: 3px 13px 0 8px; border-bottom: 1px solid #b4bccd; background: linear-gradient(#edf0fa, #e1e6f3); }
.sidehead .dn { margin-left: 4px; margin-top: 2px; }
.sidehead .x { margin-left: auto; margin-top: -3px; }
.sidetools { height: 33px; display: flex; align-items: center; padding-left: 11px; background: linear-gradient(#e5e9f5, #d9dfed); }
.sync { width: 18px; height: 13px; margin-right: 8px; }
.pen { width: 17px; height: 14px; }
.sidetools .pen { margin: 0 32px 0 15px; }
.sidetools .i14 { margin-right: 9px; }
.sidebody { flex: 1; min-height: 0; display: flex; }
.list { width: 249px; overflow: hidden; }
.sec { height: 25px; display: flex; align-items: center; padding: 0 4px 2px 5px; background: linear-gradient(#e9edf7, #d4daea); border: solid #b3bbcc; border-width: 1px 0; }
.sec svg { width: 16px; height: 15px; margin-right: 5px; }
.b { font-weight: 700; }
.dk svg { color: #52647f; }
.gr { color: #858585; }
.gr span { color: #000; }
li { height: 18px; display: flex; align-items: center; margin: 0 2px 0 3px; padding: 0 2px 0 11px; }
li svg { width: 16px; height: 14px; margin-right: 3px; }
li.hl { background: #bec4d4; }
li.hl span { color: #fff; }
em { margin-left: auto; width: 24px; height: 15px; font: 11.5px/13px "Open Sans", sans-serif; color: #fff; text-align: right; padding-right: 4px; border: 1px solid #8b99bd; border-radius: 3px; background: #a6b2d3; }
.hl em { background: #919fc4; }
.sec em { width: 22px; padding-right: 2px; }
li u { margin-left: auto; margin-right: 4px; text-decoration: none; }
.tree li { padding-left: 2px; }
.tree .l1 { padding-left: 18px; }
.tree .l2 { padding-left: 36px; }
.tree svg { margin-right: 2px; }
.tree svg.ar { width: 6px; height: 6px; margin-right: 4px; }
.tree svg.cl { width: 5px; height: 9px; margin-right: 3px; }
.scroll { width: 17px; background: linear-gradient(90deg, #e4e4e4, #f3f3f3); display: flex; flex-direction: column; align-items: center; justify-content: space-between; padding: 7px 0 6px; }
.scroll .dn { color: #666; width: 7px; height: 4px; }
.thumb { width: 15px; height: 380px; margin-top: 7px; margin-bottom: auto; border: 1px solid #999; border-radius: 2px; background: linear-gradient(90deg, #f4f4f4 0, #e6e6e6 45%, #c6c6c8 55%, #d6d6d8); display: flex; flex-direction: column; align-items: center; justify-content: center; gap: 1px; }
.thumb s { width: 7px; height: 1px; background: #555; }

/* main pane */
.main { width: 1299px; display: flex; flex-direction: column; }
.head { height: 56px; flex: none; background: linear-gradient(#edf0fa, #d9dfed); border-bottom: 1px solid #b4bccb; }
.title { height: 28px; display: flex; align-items: center; padding-left: 7px; }
.title .dn { margin: 2px 6px 0 5px; }
.tools { height: 26px; padding-left: 10px; display: grid; grid-template-columns: 82px 145px 119px 113px 87px 88px 423px 80px 149px; }
.tools > div { display: flex; align-items: center; }
.tools .pen { margin-right: 2px; }
.t15 { width: 15px; height: 14px; margin-right: 3px; }
.t16 { width: 16px; height: 12px; margin-right: 3px; }
.t20 { width: 20px; height: 12px; margin-right: 2px; }
.c { margin-right: 4px; }
.far { margin-left: 50px; }
.near { margin-left: 6px; }
.tools > .search { height: 23px; margin-top: 2px; border: 1px solid #a9b3c6; border-radius: 3px; background: #fff; color: #7a7a7a; padding: 0 3px 0 4px; }
.search span { margin-top: -1px; }
.search .i13 { margin-right: 9px; }
.search .dn { color: #000; margin-left: auto; }
.mails { height: 251px; flex: none; }
.cols { height: 21px; margin-bottom: 1px; display: flex; background: linear-gradient(#fff 9px, #f4f5f5 9px); border-bottom: 1px solid #cfd1d3; padding-top: 2px; }
.cols > span { border-right: 1px solid #dfe1e3; padding: 2px 0 0 2px; display: flex; }
.cols > .c0 { width: 22px; justify-content: center; padding-left: 1px; }
.c0 svg { width: 12px; height: 12px; margin-top: 1px; }
.c1 { width: 238px; }
.c2 { width: 657px; }
.c3 { width: 224px; }
.cols .c4 { width: 136px; justify-content: flex-end; padding-right: 1px; }
.cols .c5 { width: 20px; padding-top: 1px; padding-left: 3px; }
.c5 svg { width: 15px; height: 15px; }
.row { height: 18px; margin: 0 2px; display: flex; align-items: center; padding-left: 4px; font-weight: 700; color: #0000c8; }
.row:nth-child(odd) { background: #f5f7fb; }
.su { width: 12px; height: 12px; margin-right: 7px; }
.pe { width: 14px; height: 13px; color: #a9b5c9; margin-right: 4px; }
.nm { width: 218px; }
.tw { width: 10px; }
.tw svg { width: 6px; height: 6px; margin-left: 1px; }
.en { width: 16px; height: 12px; margin-right: 3px; opacity: .75; }
.sj { width: 629px; }
.ch .tw { width: 26px; }
.ch .sj { width: 613px; }
.dt { width: 262px; }
.sz { width: 93px; text-align: right; }
.row.cur { background: #3398fe; color: #fff; outline: 1px dotted #e0792a; outline-offset: -1px; }
.cur .pe { color: #5c92cf; }
.cur .en { opacity: 1; }

.mhead { height: 94px; flex: none; border: solid #a9afbb; border-width: 1px 0; background: linear-gradient(#edf0fa, #d9dfed); }
.subj { height: 32px; display: flex; justify-content: space-between; padding: 5px 7px 0 7px; }
.st { font-size: 19px; line-height: 27px; }
.f { height: 20px; display: flex; align-items: center; padding-left: 5px; }
.f b { width: 71px; }
.f svg { width: 14px; height: 13px; color: #a3b0c6; margin-right: 3px; }
.f svg.dn { width: 8px; height: 5px; color: #7b87a0; margin-left: 1px; }
.f svg.s { margin-left: 3px; }
.msg { margin: 0; flex: 1; padding: 1px 10px; font: 11.63px/15px "DejaVu Sans Mono", "Liberation Mono", monospace; }
.sig { color: #808080; }
.quick { height: 40px; flex: none; display: flex; }
.qt { flex: 1; border: solid #a3a6ad; border-width: 1px 0 1px 1px; padding: 2px 3px; color: #808080; }
.qs { width: 18px; border: solid #a3a6ad; border-width: 1px 1px 1px 0; background: #efefef; box-shadow: inset 0 0 0 1px #fff; display: flex; flex-direction: column; justify-content: space-between; align-items: center; padding: 8px 0 7px; }
.qs .dn { width: 7px; height: 4px; color: #888; }
.qb { width: 100px; background: linear-gradient(#d3daed, #dfe5f4); color: #666; display: flex; align-items: center; justify-content: center; border-bottom: 1px solid #a3a6ad; padding-left: 1px; }

/* status bar */
.status { height: 21px; flex: none; display: flex; justify-content: space-between; background: linear-gradient(#e9ecf6, #ccd2e4); border-top: 1px solid #a9afbd; border-bottom: 1px solid #8c92a4; }
.sl { width: 142px; border-right: 1px solid #a9b1c2; display: flex; align-items: center; padding-left: 10px; gap: 20px; }
.pn { width: 14px; height: 12px; }
.cloud { width: 14px; height: 10px; }
.sr { width: 202px; border-left: 1px solid #a9b1c2; display: flex; align-items: center; padding-left: 20px; }
.sr .dn { color: #4b5d79; }
.slider { width: 150px; height: 16px; margin-left: 19px; margin-top: 2px; }

/* task bar */
.task { height: 40px; flex: none; display: flex; padding-top: 1px; background: linear-gradient(105deg, #2e2e2e 0, #3b3b3b 5%, #454545 30%, #3d3d3d 45%, #4a4a4a 52%, #3c3c3c 58%, #494949 66%, #4a4a4a 68%, #2b2b2b 72%, #2d2d2d 100%); border-top: 1px solid #111; box-shadow: inset 0 1px 0 #777; }
.orb { width: 60px; padding: 0 0 0 8px; }
.orb svg { width: 38px; height: 38px; }
.tb { width: 58px; height: 38px; margin-right: 4px; display: flex; align-items: center; justify-content: center; flex: none; border: 1px solid transparent; border-radius: 3px; }
.tb svg { width: 32px; height: 32px; }
.run { border-color: #b0b0b0; background: linear-gradient(135deg, #a4a4a4 0, #7b7b7b 30%, #686868 45%, #565656 50%, #6a6a6a); box-shadow: 0 0 0 1px #1c1c1c; }
.lit { background: linear-gradient(135deg, #eee 0, #ccc 35%, #aaa 50%, #c4c4c4); border-color: #eee; }
.stack { width: 54px; margin-right: 8px; box-shadow: 0 0 0 1px #222, 4px 0 0 0 #555, 5px 0 0 0 #aaa; }
.tray { margin-left: auto; display: flex; color: #fff; width: 454px; }
.pan { height: 39px; border: solid #858585; border-width: 1px 0 0 1px; border-radius: 18px 0 0 0; background: linear-gradient(115deg, #666, #3c3c3c 50%, #303030); }
.pan.sig { width: 94px; padding: 9px 0 0 14px; border-right: 1px solid #111; }
.bars { width: 66px; height: 20px; }
.bat { width: 99px; display: flex; padding: 8px 0 0 13px; }
.cell { width: 43px; height: 18px; border: 1px solid #fff; background: linear-gradient(#22a84c, #056a24); outline: 1px solid #111; font-size: 11.5px; line-height: 15px; padding-left: 5px; box-shadow: 4px 0 0 -1px #fff; }
.plug { width: 16px; height: 12px; margin: 4px 0 0 12px; }
.icons { width: 165px; display: flex; align-items: center; gap: 8px; padding: 0 0 0 6px; border-left: 1px solid #111; }
.icons .dn { color: #eee; width: 7px; height: 4px; margin-right: 4px; }
.time { width: 82px; padding: 2px 0 0 3px; display: flex; flex-direction: column; align-items: center; line-height: 17px; }
.desk { width: 14px; height: 38px; border: 1px solid #777; background: linear-gradient(135deg, #888, #444 50%, #333); }
```
